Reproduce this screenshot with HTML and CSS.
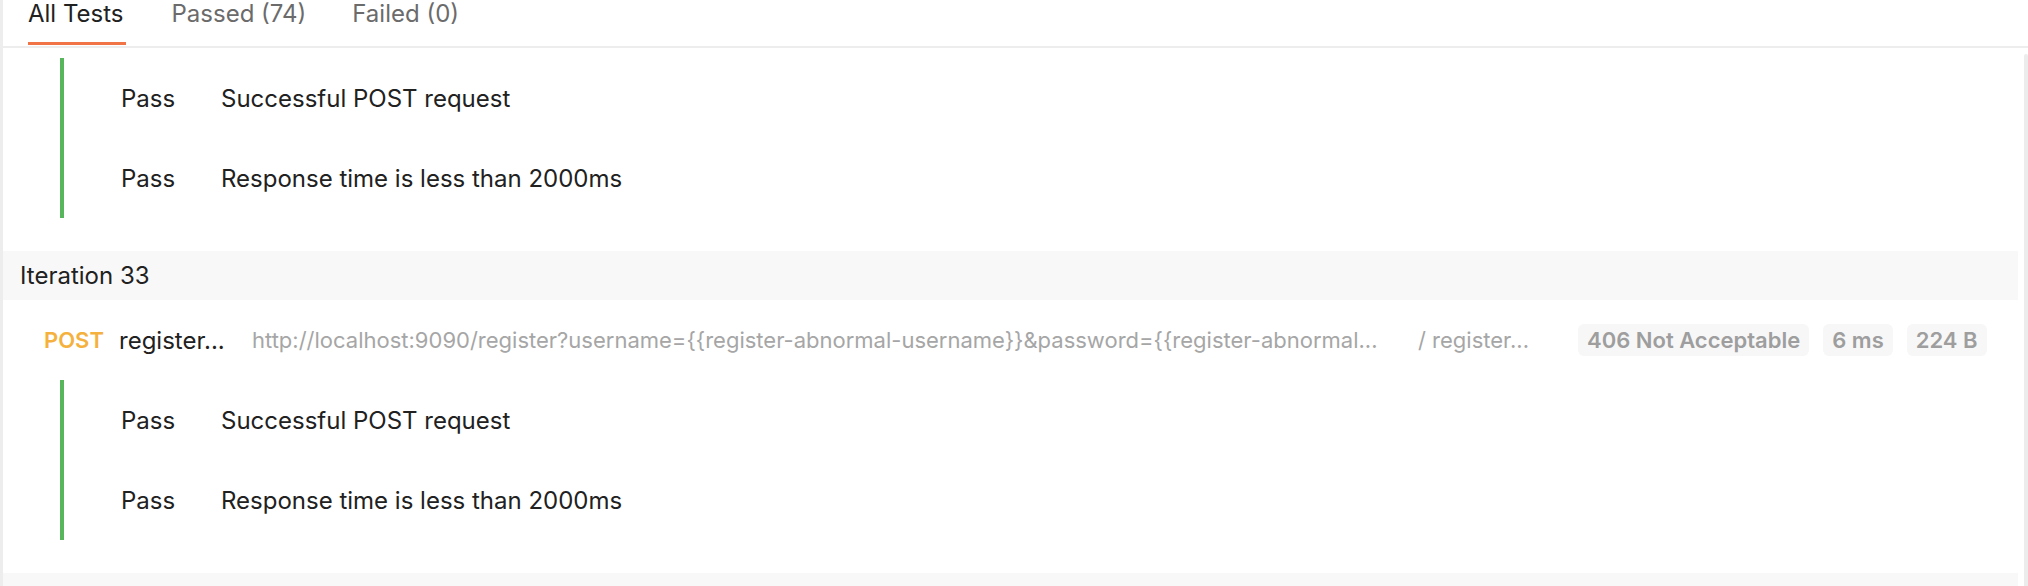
FILE: index.html
```html
<!DOCTYPE html>
<html lang="en">
<head>
<meta charset="utf-8">
<title>Test Results</title>
<link rel="stylesheet" href="styles.css">
</head>
<body>
<div class="panel">
  <div class="tabs">
    <div class="tab active">All Tests</div>
    <div class="tab">Passed (74)</div>
    <div class="tab">Failed (0)</div>
  </div>
  <div class="content">
    <div class="tests">
      <div class="test-row"><span class="status">Pass</span><span class="name">Successful POST request</span></div>
      <div class="test-row"><span class="status">Pass</span><span class="name">Response time is less than 2000ms</span></div>
    </div>
    <div class="iteration">Iteration 33</div>
    <div class="request">
      <span class="method">POST</span>
      <span class="req-name">register...</span>
      <span class="url">http://localhost:9090/register?username={{register-abnormal-username}}&amp;password={{register-abnormal...</span>
      <span class="path">/ register...</span>
      <div class="badges">
        <span class="badge">406 Not Acceptable</span>
        <span class="badge">6 ms</span>
        <span class="badge">224 B</span>
      </div>
    </div>
    <div class="tests">
      <div class="test-row"><span class="status">Pass</span><span class="name">Successful POST request</span></div>
      <div class="test-row"><span class="status">Pass</span><span class="name">Response time is less than 2000ms</span></div>
    </div>
    <div class="iteration"></div>
  </div>
  <div class="scrollbar"></div>
</div>
</body>
</html>
```

FILE: styles.css
```css
html, body {
  margin: 0;
  padding: 0;
  background: #ffffff;
}
body {
  font-family: Inter, "Noto Sans", sans-serif;
  font-size: 24px;
  color: #212121;
  width: 2028px;
  height: 586px;
  overflow: hidden;
}
.panel {
  position: relative;
  height: 586px;
  border-left: 3px solid #ededed;
  box-sizing: border-box;
  overflow: hidden;
}
.tabs {
  display: flex;
  gap: 46px;
  height: 46px;
  padding-left: 25px;
  border-bottom: 2px solid #ededed;
}
.tab {
  height: 45px;
  box-sizing: border-box;
  line-height: 28px;
  color: #6b6b6b;
  white-space: nowrap;
}
.tab.active {
  color: #212121;
  border-bottom: 3px solid #f07446;
  padding-right: 2px;
}
.content {
  padding-right: 10px;
}
.tests {
  margin: 10px 0 33px 57px;
  border-left: 4px solid #57b65b;
}
.test-row {
  display: flex;
  align-items: center;
  height: 80px;
  padding-left: 57px;
  white-space: nowrap;
}
.status {
  width: 100px;
  flex: none;
}
.iteration {
  height: 49px;
  background: #f8f8f8;
  display: flex;
  align-items: center;
  padding-left: 17px;
}
.request {
  display: flex;
  align-items: center;
  height: 80px;
  padding-left: 41px;
  white-space: nowrap;
}
.method {
  color: #f5b13d;
  font-weight: 600;
  font-size: 22px;
  width: 75px;
  flex: none;
}
.req-name {
  width: 133px;
  flex: none;
}
.url {
  width: 1166px;
  flex: none;
  overflow: hidden;
  color: #a6a6a6;
  font-size: 22px;
}
.path {
  width: 160px;
  flex: none;
  overflow: hidden;
  color: #a6a6a6;
  font-size: 22px;
}
.badges {
  display: flex;
  gap: 14px;
}
.badge {
  display: inline-flex;
  align-items: center;
  height: 32px;
  padding: 0 9px;
  border-radius: 6px;
  background: #f7f7f7;
  color: #9e9e9e;
  font-weight: 600;
  font-size: 22px;
}
.request + .tests {
  margin-top: 0;
}
.scrollbar {
  position: absolute;
  right: 0;
  top: 54px;
  bottom: 0;
  width: 4px;
  background: #ececec;
  border-radius: 3px 3px 0 0;
}
```
